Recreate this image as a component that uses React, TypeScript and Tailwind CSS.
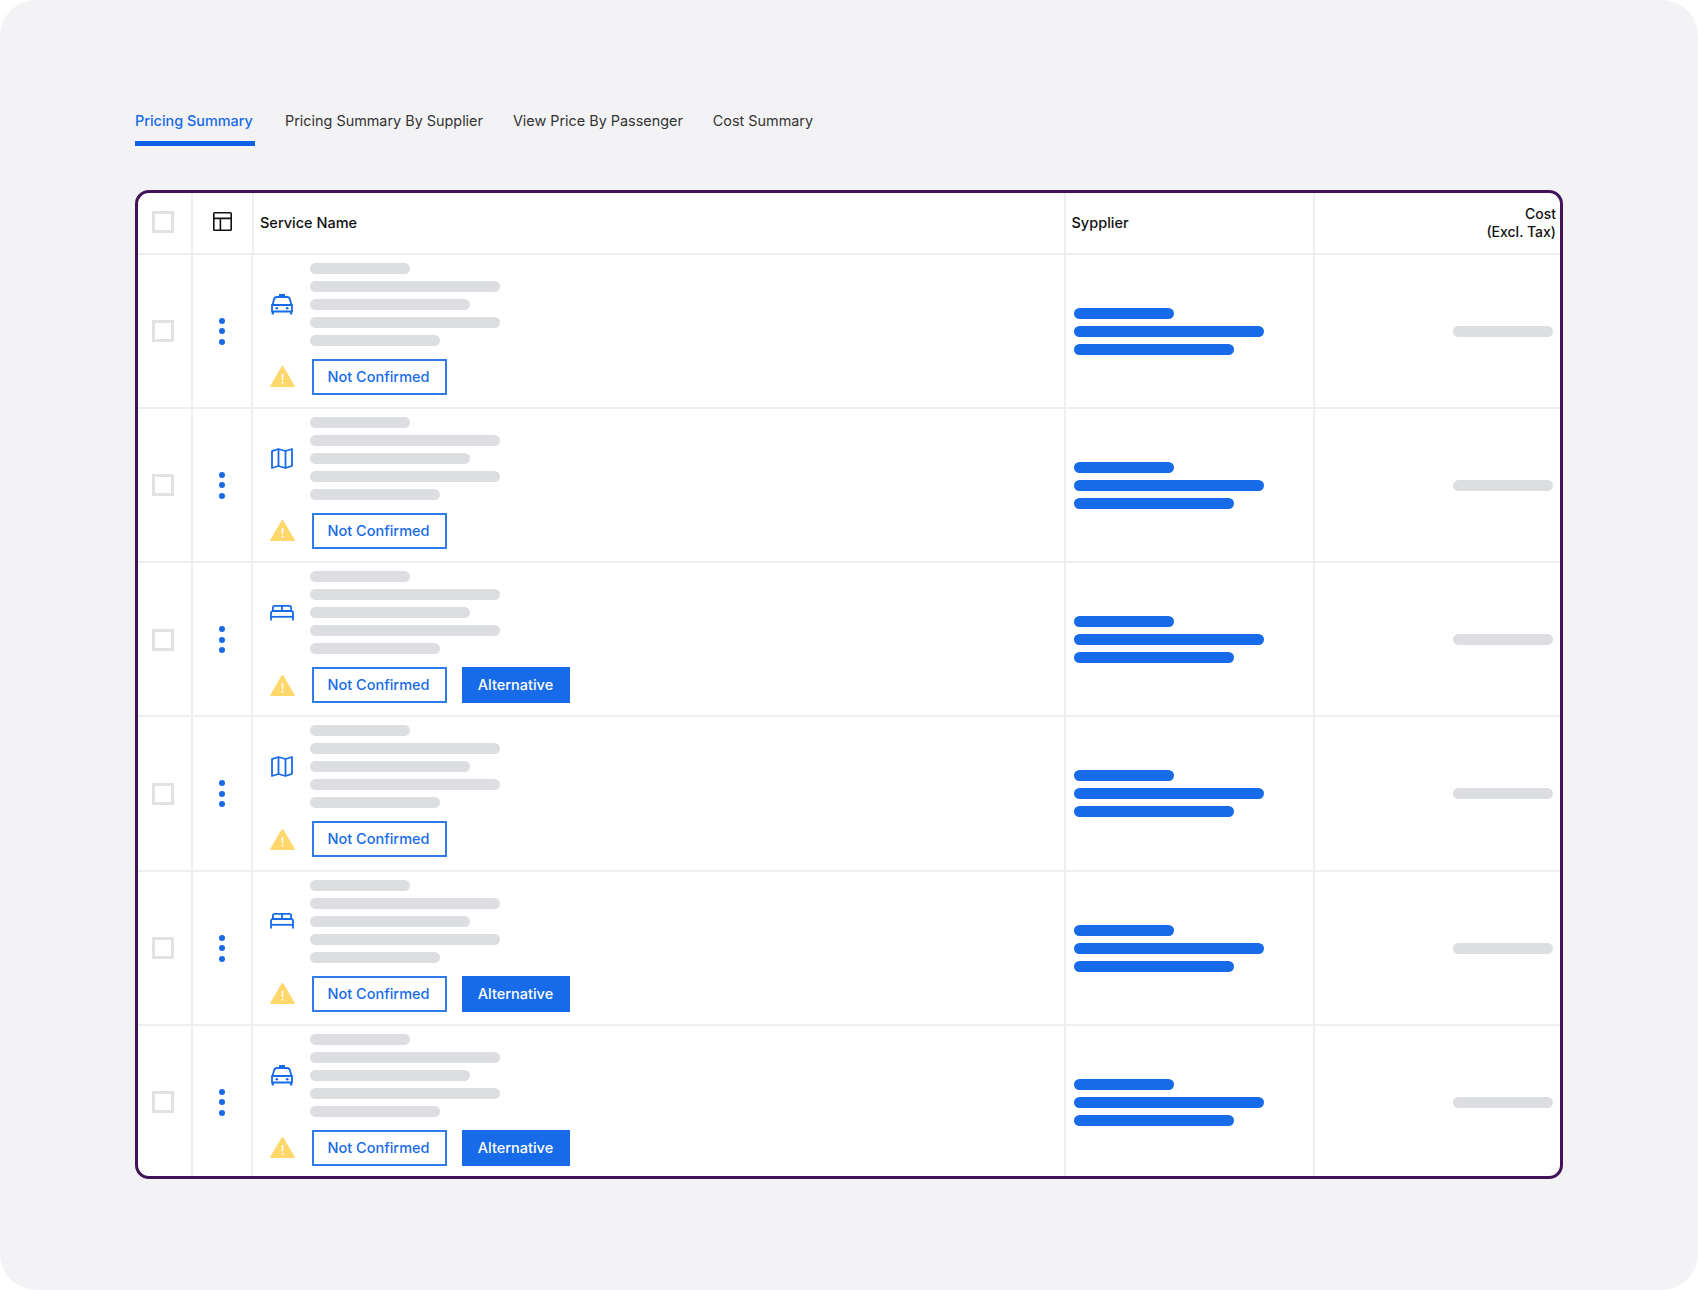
const tabs = ['Pricing Summary', 'Pricing Summary By Supplier', 'View Price By Passenger', 'Cost Summary'];

type Kind = 'taxi' | 'map' | 'bed';

const rows: { kind: Kind; alt: boolean }[] = [
  { kind: 'taxi', alt: false },
  { kind: 'map', alt: false },
  { kind: 'bed', alt: true },
  { kind: 'map', alt: false },
  { kind: 'bed', alt: true },
  { kind: 'taxi', alt: true },
];

function TaxiIcon() {
  return (
    <svg width="22" height="21" viewBox="0 0 22 21" fill="none" stroke="#176BE8" strokeWidth="1.8" strokeLinejoin="round">
      <rect x="8" y="0" width="6" height="3" fill="#176BE8" stroke="none" />
      <path d="M1.5 11 3 5.5C3.4 3.9 4.4 3 6 3h10c1.6 0 2.6.9 3 2.5l1.5 5.5" />
      <path d="M1 11h20v6.5H1z" />
      <path d="M1.8 17.5V20.6M20.2 17.5V20.6" strokeWidth="2.2" />
      <circle cx="5.8" cy="14.2" r="1.3" fill="#176BE8" stroke="none" />
      <circle cx="16.2" cy="14.2" r="1.3" fill="#176BE8" stroke="none" />
    </svg>
  );
}

function MapIcon() {
  return (
    <svg width="22" height="21" viewBox="0 0 22 21" fill="none" stroke="#176BE8" strokeWidth="1.8" strokeLinejoin="round">
      <path d="M1 3.2 7.5 1l7 2L21 1v16.8L14.5 20l-7-2L1 20z" />
      <path d="M7.5 1v17M14.5 3v17" />
    </svg>
  );
}

function BedIcon() {
  return (
    <svg width="24" height="16" viewBox="0 0 24 16" fill="none" stroke="#176BE8" strokeWidth="1.8" strokeLinejoin="round">
      <path d="M2.9 6V2.6C2.9 1.5 3.6.9 4.6.9h14.8c1 0 1.7.6 1.7 1.7V6" />
      <path d="M12 .9V6" />
      <path d="M1 15.6V8c0-1.3.7-2 2-2h18c1.3 0 2 .7 2 2v7.6" />
      <path d="M1 11.8h22" />
    </svg>
  );
}

function WarningIcon() {
  return (
    <svg width="25" height="21" viewBox="0 0 25 21">
      <path d="M11.6.6c.4-.7 1.4-.7 1.8 0L24.8 20c.2.5-.1 1-.7 1H.9c-.6 0-.9-.5-.7-1z" fill="#FFD76B" />
      <path d="M11.6 8h1.8l-.3 6.5h-1.2z" fill="#fff" />
      <circle cx="12.5" cy="16.7" r="1.05" fill="#fff" />
    </svg>
  );
}

function LayoutIcon() {
  return (
    <svg width="19" height="19" viewBox="0 0 19 19" fill="none" stroke="#111" strokeWidth="1.6">
      <rect x="0.8" y="0.8" width="17.4" height="17.4" rx="0.8" />
      <path d="M.8 6.4h17.4M7.4 6.4v11.8" />
    </svg>
  );
}

function Checkbox() {
  return <div className="h-[22px] w-[22px] border-[3px] border-[#e2e2e2] bg-white" />;
}

function RowIcon({ kind }: { kind: Kind }) {
  if (kind === 'taxi') return <TaxiIcon />;
  if (kind === 'map') return <MapIcon />;
  return <BedIcon />;
}

export default function App() {
  return (
    <div className="h-[1290px] w-[1698px] bg-white font-['Inter',sans-serif]">
      <div className="h-full rounded-[36px] bg-[#f3f3f6] pl-[135px] pt-[110px]">
        {/* Tabs */}
        <div className="flex gap-[30px] text-[14.4px] leading-[22px] text-[#333]">
          {tabs.map((tab, i) => (
            <div key={tab} className={i === 0 ? 'font-medium text-[#176BE8]' : ''}>
              <div className={i === 0 ? 'h-[36px] w-[120px] whitespace-nowrap border-b-[5px] border-[#0f62e6]' : 'h-[36px] whitespace-nowrap'}>
                {tab}
              </div>
            </div>
          ))}
        </div>

        {/* Table */}
        <div className="mt-[44px] h-[988.5px] w-[1427.5px] overflow-hidden rounded-[14px] border-[3px] border-[#41145a] bg-white">
          <div className="grid h-[61.5px] grid-cols-[55px_60.5px_812px_249px_1fr] border-b-2 border-[#eeeeee] text-[14.5px] font-medium text-[#111]">
            <div className="flex items-center justify-center border-r-2 border-[#eeeeee] pb-[2px] pr-[3px]">
              <Checkbox />
            </div>
            <div className="flex items-center justify-center border-r-2 border-[#eeeeee] pb-[2px] pl-[1px]">
              <LayoutIcon />
            </div>
            <div className="flex items-center border-r-2 border-[#eeeeee] pl-[6.5px]">Service Name</div>
            <div className="flex items-center border-r-2 border-[#eeeeee] pl-[6px]">Sypplier</div>
            <div className="flex items-center justify-end pr-[3.5px] text-right text-[14px] leading-[18px]">
              <div>
                Cost
                <br />
                (Excl. Tax)
              </div>
            </div>
          </div>

          {rows.map((row, i) => (
            <div
              key={i}
              className="grid h-[154.25px] grid-cols-[54.5px_60px_813px_249px_1fr] border-b-2 border-[#eeeeee]"
            >
              <div className="flex items-center justify-center border-r-2 border-[#eeeeee] pr-[2.5px] pt-[1px]">
                <Checkbox />
              </div>
              <div className="flex flex-col items-center justify-center gap-[4.5px] border-r-2 border-[#eeeeee] pt-[1px]">
                <div className="h-[6px] w-[6px] rounded-full bg-[#176BE8]" />
                <div className="h-[6px] w-[6px] rounded-full bg-[#176BE8]" />
                <div className="h-[6px] w-[6px] rounded-full bg-[#176BE8]" />
              </div>
              <div className="flex flex-col border-r-2 border-[#eeeeee] pl-[17px] pt-[8px]">
                <div className="flex items-center">
                  <div className="flex w-[25px] justify-center">
                    <RowIcon kind={row.kind} />
                  </div>
                  <div className="ml-[15px] flex flex-col gap-[7px]">
                    <div className="h-[11px] w-[100px] rounded-full bg-[#dddee2]" />
                    <div className="h-[11px] w-[190px] rounded-full bg-[#dddee2]" />
                    <div className="h-[11px] w-[160px] rounded-full bg-[#dddee2]" />
                    <div className="h-[11px] w-[190px] rounded-full bg-[#dddee2]" />
                    <div className="h-[11px] w-[130px] rounded-full bg-[#dddee2]" />
                  </div>
                </div>
                <div className="mt-[13px] flex items-center">
                  <WarningIcon />
                  <div className="ml-[17px] flex h-[36px] w-[135px] items-center justify-center border-2 border-[#2f7be9] bg-white pr-[1px] text-[14.5px] font-medium text-[#176BE8]">
                    Not Confirmed
                  </div>
                  {row.alt && (
                    <div className="ml-[15px] flex h-[36px] w-[108px] items-center justify-center bg-[#176BE8] text-[14.5px] font-medium text-white">
                      Alternative
                    </div>
                  )}
                </div>
              </div>
              <div className="flex flex-col justify-center gap-[7px] border-r-2 border-[#eeeeee] pl-[8.5px] pt-[1px]">
                <div className="h-[11px] w-[100px] rounded-full bg-[#176BE8]" />
                <div className="h-[11px] w-[190px] rounded-full bg-[#176BE8]" />
                <div className="h-[11px] w-[160px] rounded-full bg-[#176BE8]" />
              </div>
              <div className="flex items-center justify-end pr-[6.5px] pt-[1px]">
                <div className="h-[11px] w-[100px] rounded-full bg-[#dddee2]" />
              </div>
            </div>
          ))}
        </div>
      </div>
    </div>
  );
}
